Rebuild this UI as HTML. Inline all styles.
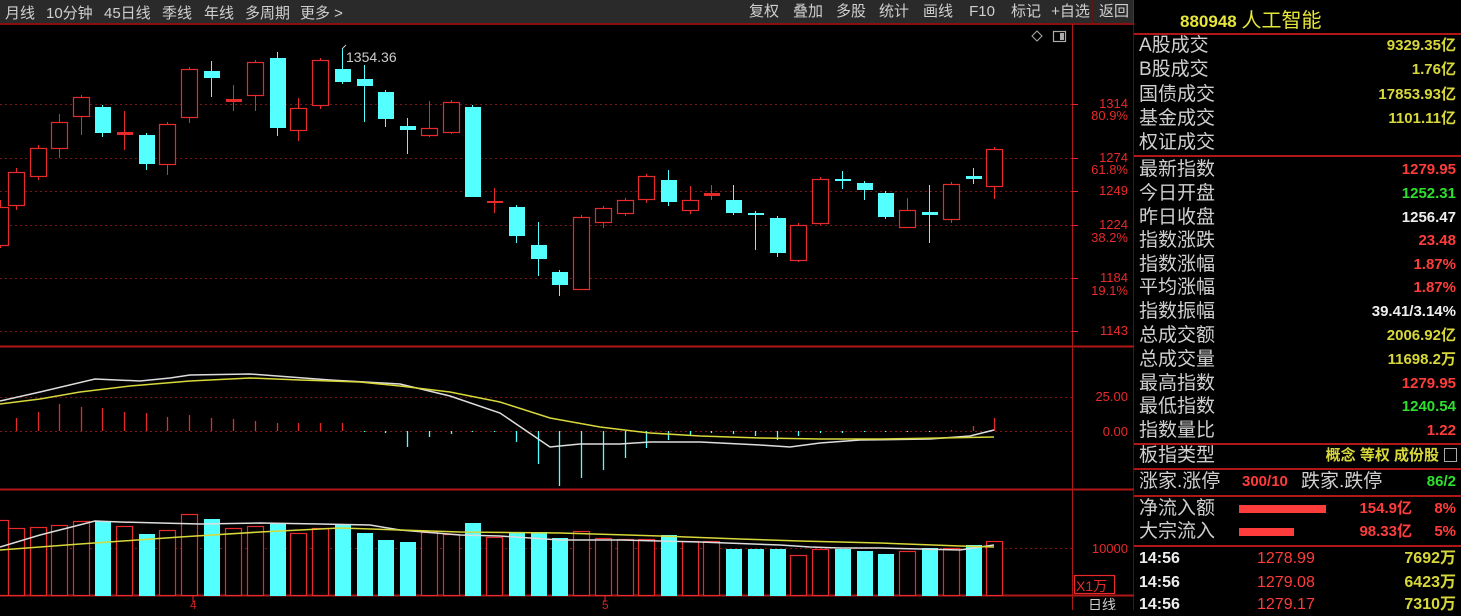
<!DOCTYPE html>
<html><head><meta charset="utf-8"><style>
body{margin:0;background:#000;width:1461px;height:610px;overflow:hidden;font-family:"Liberation Sans","Noto Sans CJK SC",sans-serif;position:relative}
.t{position:absolute;white-space:nowrap}
#top{position:absolute;left:0;top:0;width:1134px;height:23px;background:#2a2a2a;border-bottom:2px solid #8a1010}
#top span{position:absolute;top:2px;color:#cfcfcf;font-size:15px}
.btn{position:absolute;top:0;height:23px;border-left:1px solid #6a1010;color:#cfcfcf;font-size:15px;text-align:center;line-height:24px}
.lab{position:absolute;left:1139px;color:#cfcfcf;font-size:19px;line-height:22px}
.val{position:absolute;right:5px;font-size:15px;font-weight:bold;line-height:22px}
.hl{position:absolute;left:1134px;width:327px;height:2px;background:#b01818}
.y{color:#d8d83a}.r{color:#ff3c3c}.g{color:#2ee02e}.w{color:#eee}
</style></head><body>
<div id="top">
<span style="left:5px">月线</span><span style="left:46px">10分钟</span><span style="left:104px">45日线</span><span style="left:162px">季线</span><span style="left:204px">年线</span><span style="left:245px">多周期</span><span style="left:300px">更多 &gt;</span>
<div class="btn" style="left:741px;width:44px">复权</div><div class="btn" style="left:785px;width:44px">叠加</div><div class="btn" style="left:829px;width:42px">多股</div><div class="btn" style="left:871px;width:44px">统计</div><div class="btn" style="left:915px;width:44px">画线</div><div class="btn" style="left:959px;width:44px">F10</div><div class="btn" style="left:1003px;width:44px">标记</div><div class="btn" style="left:1047px;width:45px">+自选</div><div class="btn" style="left:1092px;width:42px">返回</div>
</div>
<svg id="c" width="1134" height="610" style="position:absolute;left:0;top:0"></svg>
<div class="t" style="left:1180px;top:4px;font-size:17px;color:#e6e63a"><b>880948</b> <span style="font-size:20px">人工智能</span></div>
<div class="hl" style="top:33px"></div>
<div class="hl" style="top:155px"></div>
<div class="hl" style="top:443px"></div>
<div class="hl" style="top:468px"></div>
<div class="hl" style="top:495px"></div>
<div class="hl" style="top:545px"></div>
<div id="rp"></div>
<script>
var s=document.getElementById('c'),h='';
function L(x1,y1,x2,y2,c,w,d){h+='<line x1="'+x1+'" y1="'+y1+'" x2="'+x2+'" y2="'+y2+'" stroke="'+c+'" stroke-width="'+(w||1)+'"'+(d?' stroke-dasharray="'+d+'"':'')+'/>';}
function R(x,y,w,hh,f,st){h+='<rect x="'+x+'" y="'+y+'" width="'+w+'" height="'+hh+'" fill="'+f+'"'+(st?' stroke="'+st+'" stroke-width="1.2"':'')+'/>';}
function T(x,y,t,c,sz,a){h+='<text x="'+x+'" y="'+y+'" fill="'+c+'" font-size="'+(sz||13)+'" text-anchor="'+(a||'start')+'" font-family="Liberation Sans,Noto Sans CJK SC,sans-serif">'+t+'</text>';}
var red='#e82a2a',cy='#54ffff';
L(1072.5,24,1072.5,610,'#b01818');L(1134.5,0,1134.5,610,'#b01818',2);
L(0,346.5,1134,346.5,'#b01818',2);L(0,489.5,1134,489.5,'#b01818',2);L(0,595.5,1134,595.5,'#b01818',2);
[104,158,191,225,278,331].forEach(function(y){L(0,y+.5,1072,y+.5,'#7a1515',1,'2 3');L(1072,y+.5,1078,y+.5,red)});
[[104,'1314'],[158,'1274'],[191,'1249'],[225,'1224'],[278,'1184'],[331,'1143']].forEach(function(a){T(1128,a[0]+4,a[1],red,13,'end')});
[[116,'80.9%'],[170,'61.8%'],[238,'38.2%'],[291,'19.1%']].forEach(function(a){T(1128,a[0]+4,a[1],red,13,'end')});
L(0,397.5,1072,397.5,'#7a1515',1,'2 3');L(0,431.5,1072,431.5,'#8a1515',1,'2 3');L(0,548.5,1072,548.5,'#7a1515',1,'2 3');
T(1128,401,'25.00',red,13,'end');T(1128,436,'0.00',red,13,'end');T(1128,553,'10000',red,13,'end');
R(1074.5,575.5,40,18,'none',red);T(1076,591,'X1万',red,14);
T(1088,610,'日线','#ccc',14);T(190,609,'4','#c22',12);T(602,609,'5','#c22',12);
L(193,596,193,602,red);L(605,596,605,602,red);
var C=[[0,207,245,200,248,1],[16,172,205,168,210,1],[38,148,176,145,180,1],[59,122,148,114,158,1],[81,97,116,95,135,1],[102,107,133,105,137,0],[124,132,135,111,150,1],[146,135,164,133,170,0],[167,124,164,122,175,1],[189,69,117,67,123,1],[211,71,78,61,97,0],[233,99,102,85,111,1],[255,62,95,60,111,1],[277,58,128,52,136,0],[298,108,130,98,141,1],[320,60,105,58,109,1],[342,69,82,49,84,0],[364,79,86,65,122,0],[385,92,119,90,127,0],[407,126,130,118,154,0],[429,128,135,101,137,1],[451,102,132,100,134,1],[472,107,197,105,197,0],[494,201,203,188,213,1],[516,207,236,205,243,0],[538,245,259,222,276,0],[559,272,285,270,296,0],[581,217,289,215,290,1],[603,208,222,206,228,1],[625,200,213,198,216,1],[646,176,199,174,203,1],[668,180,202,170,206,0],[690,200,210,186,214,1],[711,193,196,185,200,1],[733,200,213,185,215,0],[755,213,215,211,250,0],[777,218,253,216,257,0],[798,225,260,223,262,1],[820,179,223,177,225,1],[842,179,181,171,189,0],[864,183,190,181,200,0],[885,193,217,191,219,0],[907,210,227,198,228,1],[929,212,215,185,243,0],[951,184,219,182,223,1],[973,176,179,168,184,0],[994,149,186,147,199,1]];
C.forEach(function(c){var col=c[5]?red:cy;L(c[0]+.5,c[3],c[0]+.5,c[4],col);
 if(c[2]-c[1]<4){R(c[0]-7,c[1],16,Math.max(2,c[2]-c[1]),col)}else if(c[5]){R(c[0]-7.5,c[1]+.5,16,c[2]-c[1],'#000',col)}else R(c[0]-7,c[1],16,c[2]-c[1],col);});
L(342,49,346,45,'#ccc');T(346,62,'1354.36','#ccc',14);
h+='<path d="M1037 31 L1042 36 L1037 41 L1032 36Z" fill="none" stroke="#aaa"/>';R(1053.5,31.5,12,10,'none','#aaa');R(1060,33,4,7,'#aaa');
var M=[[16,418],[38,412],[59,404],[81,407],[102,408],[124,412],[146,413],[167,417],[189,415],[211,418],[233,419],[255,421],[277,423],[298,423],[320,423],[342,423],[364,432],[385,433],[407,447],[429,437],[451,434],[472,432],[494,432],[516,442],[538,464],[559,486],[581,478],[603,470],[625,458],[646,448],[668,440],[690,436],[711,433],[733,434],[755,436],[777,440],[798,436],[820,433],[842,433],[864,432],[885,432],[907,432],[929,432],[951,430],[973,426],[994,418]];
M.forEach(function(m){L(m[0]+.5,431,m[0]+.5,m[1],m[1]<431?red:cy,1.3)});
h+='<polyline fill="none" stroke="#ddd" stroke-width="1.5" points="0,401 40,392 95,379 140,381 170,378 190,375 250,374 330,380 400,384 450,396 500,413 550,447 580,444 620,444 650,442 700,442 760,445 790,447 820,443 860,440 930,439 970,436 994,430"/>';
h+='<polyline fill="none" stroke="#d8d83a" stroke-width="1.5" points="0,404 40,399 80,392 130,386 190,381 250,378 300,380 360,382 400,386 450,392 500,402 550,418 600,427 650,433 700,436 760,438 820,439 880,439 940,438 994,437"/>';
var V=[[0,520,1],[16,528,1],[38,527,1],[59,525,1],[81,521,1],[102,521,0],[124,526,1],[146,534,0],[167,530,1],[189,514,1],[211,519,0],[233,528,1],[255,526,1],[277,523,0],[298,533,1],[320,528,1],[342,524,0],[364,533,0],[385,540,0],[407,542,0],[429,532,1],[451,534,1],[472,523,0],[494,537,1],[516,532,0],[538,532,0],[559,538,0],[581,531,1],[603,538,1],[625,539,1],[646,539,1],[668,535,0],[690,541,1],[711,541,1],[733,549,0],[755,549,0],[777,549,0],[798,555,1],[820,549,1],[842,549,0],[864,551,0],[885,554,0],[907,551,1],[929,548,0],[951,548,1],[973,545,0],[994,541,1]];
V.forEach(function(v){if(v[2])R(v[0]-7.5,v[1]+.5,16,595-v[1],'#000',red);else R(v[0]-7,v[1],16,596-v[1],cy)});
h+='<polyline fill="none" stroke="#ddd" stroke-width="1.5" points="0,547 40,535 95,521 120,522 160,523 200,524 260,523 320,524 370,525 400,530 460,535 500,536 560,540 620,540 700,542 780,545 810,547 840,548 880,548 920,549 960,550 994,545"/>';
h+='<polyline fill="none" stroke="#d8d83a" stroke-width="1.5" points="0,550 80,544 180,537 260,532 340,528 400,530 460,532 560,533 660,536 740,539 800,541 880,543 960,546 994,547"/>';
s.innerHTML=h;
var rows=[['A股成交','9329.35亿','y',46],['B股成交','1.76亿','y',70],['国债成交','17853.93亿','y',95],['基金成交','1101.11亿','y',119],['权证成交','','y',143],
['最新指数','1279.95','r',170],['今日开盘','1252.31','g',194],['昨日收盘','1256.47','w',218],['指数涨跌','23.48','r',241],['指数涨幅','1.87%','r',265],['平均涨幅','1.87%','r',288],['指数振幅','39.41/3.14%','w',312],['总成交额','2006.92亿','y',336],['总成交量','11698.2万','y',360],['最高指数','1279.95','r',384],['最低指数','1240.54','g',407],['指数量比','1.22','r',431]];
var o='';rows.forEach(function(r){o+='<div class="lab" style="top:'+(r[3]-11)+'px">'+r[0]+'</div><div class="val '+r[2]+'" style="top:'+(r[3]-11)+'px">'+r[1]+'</div>'});
o+='<div class="lab" style="top:445px">板指类型</div><div class="val y" style="top:445px;right:22px;font-size:15px">概念 等权 成份股</div><div class="t" style="left:1444px;top:448px;width:11px;height:12px;border:1px solid #aaa"></div>';
o+='<div class="lab" style="top:471px">涨家.涨停</div><div class="val r" style="top:471px;right:auto;left:1242px">300/10</div><div class="lab" style="top:471px;left:1301px">跌家.跌停</div><div class="val g" style="top:471px">86/2</div>';
o+='<div class="lab" style="top:498px">净流入额</div><div class="t" style="left:1239px;top:505px;width:87px;height:8px;background:#ff3c3c"></div><div class="val r" style="top:498px;right:49px">154.9亿</div><div class="val r" style="top:498px">8%</div>';
o+='<div class="lab" style="top:521px">大宗流入</div><div class="t" style="left:1239px;top:528px;width:55px;height:8px;background:#ff3c3c"></div><div class="val r" style="top:521px;right:49px">98.33亿</div><div class="val r" style="top:521px">5%</div>';
[['559','1278.99','7692万'],['583','1279.08','6423万'],['605','1279.17','7310万']].forEach(function(r){var t=r[0]-11;o+='<div class="val w" style="top:'+t+'px;right:auto;left:1139px;font-size:16px">14:56</div><div class="val r" style="top:'+t+'px;right:auto;left:1257px;font-weight:normal;font-size:16px">'+r[1]+'</div><div class="val y" style="top:'+t+'px;font-size:16px">'+r[2]+'</div>'});
document.getElementById('rp').innerHTML=o;
</script>
</body></html>
